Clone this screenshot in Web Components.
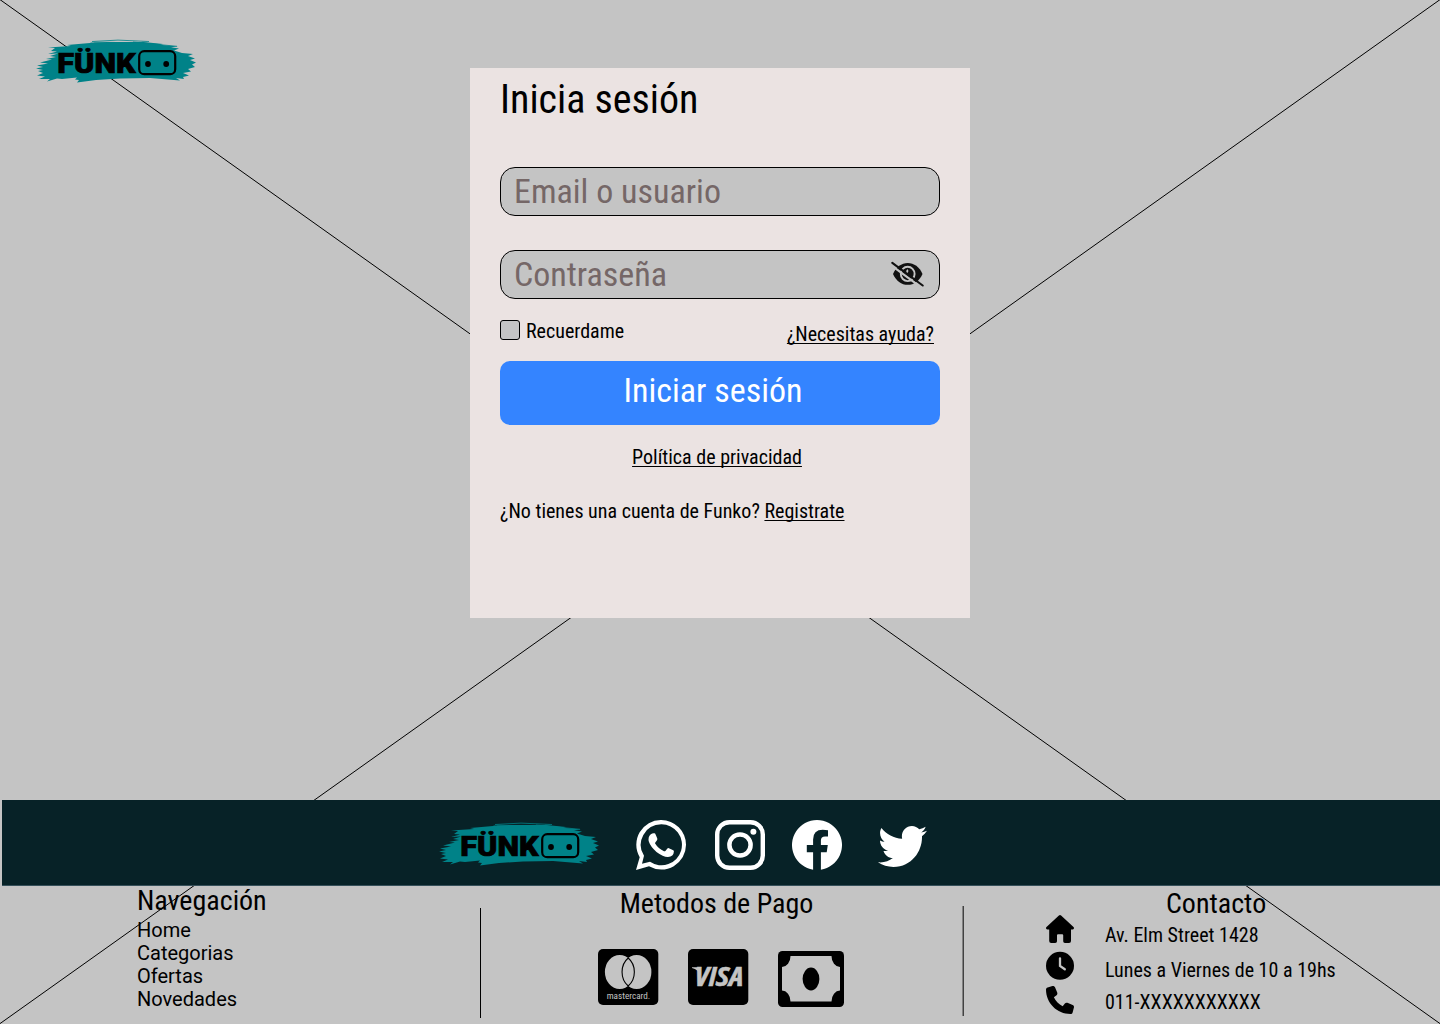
<!DOCTYPE html>
<html lang="es">
<head>
<meta charset="utf-8">
<title>Funko</title>
<style>
body{margin:0;background:#c4c4c4;font-family:"Roboto Condensed",Roboto,sans-serif;font-stretch:75%;color:#000}
</style>
</head>
<body>
<login-page></login-page>
<script>
function define(name, html){
  const t = document.createElement('template');
  t.innerHTML = html;
  customElements.define(name, class extends HTMLElement{
    constructor(){
      super();
      this.attachShadow({mode:'open'}).appendChild(t.content.cloneNode(true));
    }
  });
}

define('page-backdrop', `
<style>:host{position:absolute;inset:0;z-index:-1}svg{display:block}</style>
<svg width="1440" height="1024" stroke="#000" stroke-width="1"><path d="M0 -.4L1440 1023.600M0 1023.600L1440 -.4"/></svg>`);

define('funko-logo', `
<style>:host{display:block;width:162px;height:46px}svg{display:block}</style>
<svg width="162" height="46" viewBox="35 38 162 46">
<path fill="#008288" d="M55 48L48 47.5 71 46 67 45 90 43 91 42.500 108 42.500 94 42.200 93 41.800 118 42 148 41.800 141 41.800 163 44 160 44.800 178 46.5 171 47.3 179 48.6 174 50.5 182 53 193 54 188 56 195 58.5 190 60 196 62.5 192 64.5 195 67 188 69 191 71.5 183 73 189 75.5 183 77 184 79 176 78 180 80.5 150 78 120 78.5 96 80 77 82.5 79 80 75 79.5 77 77.5 62 79 57 78.5 47 81.5 50 79 39 79 45 76.5 37 75.5 43 73 38 71 43 70 36 68.5 43 67 37 65.5 48 63.5 40 62.5 52 59.5 46 59 56 57 50 56 58 53.5 48 54 57 51.5 51 51z"/>
<path stroke="#008288" stroke-width=".8" fill="none" d="M92 41.500L118 40.100 149 41.500M133 42L177 46.300"/>
<text x="57.200" y="73.400" font-family="Roboto" font-stretch="100%" font-weight="900" font-size="28" stroke="#000" stroke-width=".7" textLength="78.500" lengthAdjust="spacingAndGlyphs">FÜNK</text>
<rect x="139.200" y="51.200" width="36" height="23" rx="5" fill="none" stroke="#000" stroke-width="2.200"/>
<circle cx="148" cy="64" r="2.900"/><circle cx="166.200" cy="64" r="2.900"/>
</svg>`);

define('text-field', `
<style>
:host{display:flex;box-sizing:border-box;width:440px;height:49px;border:1px solid #000;border-radius:15px;background:#c4c4c4;padding:2px 15px 0 13px;justify-content:space-between;font-size:34px;line-height:42px;color:#756767}
::slotted(svg){margin-top:8px}
</style><slot></slot><slot name="icon"></slot>`);

define('check-option', `
<style>
:host{display:flex;gap:6px;font-size:20px;line-height:23px}
i{box-sizing:border-box;width:20px;height:20px;border:1px solid #000;border-radius:3px;background:#c4c4c4}
</style><i></i><span><slot></slot></span>`);

define('submit-button', `
<style>
:host{display:block;box-sizing:border-box;width:440px;height:64px;border-radius:10px;background:#3484ff;color:#fff;font-size:34px;line-height:41px;padding:9px 14px 0 0;text-align:center}
</style><slot></slot>`);

define('text-link', `
<style>:host{display:inline-block}a{font-size:20px;line-height:23px;text-decoration:underline;text-decoration-thickness:1px;text-underline-offset:2px;text-decoration-skip-ink:none}</style><a><slot></slot></a>`);

define('login-card', `
<style>
:host{display:flex;flex-direction:column;box-sizing:border-box;width:500px;height:550px;background:#ebe3e2;padding:8px 30px 0}
h1{margin:0 0 44px;font-weight:400;font-size:40px;line-height:47px}
text-field+text-field{margin-top:34px}
.row{display:flex;justify-content:space-between;margin-top:21px;height:41px;padding-right:6px}
.row text-link{margin-top:3px}
.privacy{margin:21px 6px 0 0;text-align:center;height:23px}
.join{margin-top:31px;font-size:20px;line-height:23px;white-space:nowrap}
</style>
<h1>Inicia sesión</h1>
<text-field>Email o usuario</text-field>
<text-field>Contraseña<svg slot="icon" width="33" height="26" viewBox="0 0 33 26"><path fill="#111" d="M2 12.900C5 6 10.500 2 16.700 2 23 2 28.500 6 31.500 12.900 28.500 19.800 23 23.800 16.700 23.800 10.500 23.800 5 19.800 2 12.900z"/><ellipse cx="16.700" cy="12.900" rx="6.900" ry="7.200" fill="none" stroke="#c4c4c4" stroke-width="1.900"/><path d="M16 8.800Q17.500 11 14.500 12" fill="none" stroke="#c4c4c4" stroke-width="1.800"/><path stroke="#c4c4c4" stroke-width="2.200" d="M-1 3.500L31 27"/><path stroke="#111" stroke-width="2.100" stroke-linecap="round" d="M1.300 1.800L31.700 24.500"/></svg></text-field>
<div class="row"><check-option>Recuerdame</check-option><text-link>¿Necesitas ayuda?</text-link></div>
<submit-button>Iniciar sesión</submit-button>
<div class="privacy"><text-link>Política de privacidad</text-link></div>
<div class="join">¿No tienes una cuenta de Funko? <text-link>Registrate</text-link></div>`);

define('social-bar', `
<style>
:host{display:flex;box-sizing:border-box;height:86px;margin-left:2px;padding:20px 0 0 436px;background:#072227;border-bottom:1px solid #35505a}
svg{display:block;flex:none}
funko-logo{margin-top:1px}
</style>
<funko-logo></funko-logo>
<svg style="margin-left:36px" width="50" height="50" viewBox="0 0 50 50" fill="#fff"><path fill-rule="evenodd" d="M25.300 0A24.700 24.700 0 0 1 50 24.700 24.700 24.700 0 0 1 13 46.300L0 50 3.700 37.200A24.700 24.700 0 0 1 25.300 0zM25.300 4.300A20.500 20.500 0 0 0 8 35.800L6 43.800 14 41.800A20.500 20.500 0 1 0 25.300 4.300z"/><path d="M14.800 14.200Q16.700 12.900 18.400 13.300 19.200 13.400 19.600 14.500L21.200 18.300Q21.600 19.300 21 20.200L19.300 22.400Q18.800 23 19.300 23.800 22.500 29 28 31.200 28.800 31.500 29.400 30.900L31.400 28.500Q32 27.800 32.900 28.200L37.200 30.300Q38 30.700 37.900 31.600 37.600 36.900 32 37 27.500 37.200 20.500 32 14.500 26.700 12.900 21.800 11.600 17 14.800 14.200z"/></svg>
<svg style="margin-left:29px" width="50" height="50" viewBox="0 0 50 50" fill="none" stroke="#fff"><rect x="2.200" y="2.200" width="45.600" height="45.600" rx="12.300" stroke-width="4.400"/><circle cx="25" cy="25" r="10.600" stroke-width="4.500"/><circle cx="38.400" cy="11.700" r="3" fill="#fff" stroke="none"/></svg>
<svg style="margin-left:27px" width="50" height="50" viewBox="0 0 50 50" fill="#fff"><path d="M21.100 49.700A25 25 0 1 1 28.900 49.700V32.300H34.700L35.800 25H28.900V20.300Q28.900 16.500 33.100 16.500H36V10.200Q33.500 9.700 30.800 9.700 21.100 9.700 21.100 19.500V25H14.800V32.300H21.100z"/></svg>
<svg style="margin:6px 0 0 36px" width="49" height="41" viewBox="0 48 512 416" preserveAspectRatio="none" fill="#fff"><path d="M459.370 151.716c.325 4.548.325 9.097.325 13.645 0 138.720-105.583 298.558-298.558 298.558-59.452 0-114.680-17.219-161.137-47.106 8.447.974 16.568 1.299 25.340 1.299 49.055 0 94.213-16.568 130.274-44.832-46.132-.975-84.792-31.188-98.112-72.772 6.498.974 12.995 1.624 19.818 1.624 9.421 0 18.843-1.300 27.614-3.573-48.081-9.747-84.143-51.980-84.143-102.985v-1.299c13.969 7.797 30.214 12.670 47.431 13.319-28.264-18.843-46.781-51.005-46.781-87.391 0-19.492 5.197-37.360 14.294-52.954 51.655 63.675 129.300 105.258 216.365 109.807-1.624-7.797-2.599-15.918-2.599-24.040 0-57.828 46.782-104.934 104.934-104.934 30.213 0 57.502 12.670 76.670 33.137 23.715-4.548 46.456-13.320 66.599-25.340-7.798 24.366-24.366 44.833-46.132 57.827 21.117-2.273 41.584-8.122 60.426-16.243-14.292 20.791-32.161 39.308-52.628 54.253z"/></svg>`);

define('footer-nav', `
<style>:host{display:block;box-sizing:border-box;width:480px;padding-left:137px}
h2{margin:-2px 0 2px;font-weight:400;font-size:28px;line-height:33px}
a{display:block;font-family:Roboto,sans-serif;font-stretch:100%;font-size:20px;line-height:23px}</style>
<h2>Navegación</h2><a>Home</a><a>Categorias</a><a>Ofertas</a><a>Novedades</a>`);

define('payment-methods', `
<style>:host{display:flex;width:484px}
i{width:1px;height:110px;background:#000}
i:last-child{width:2px;margin-top:-2px;background:linear-gradient(90deg,#828282 50%,#424242 50%)}
section{width:481px}
h2{margin:-21px 0 0;padding-right:10px;text-align:center;font-weight:400;font-size:28px;line-height:33px}
div{display:flex;padding:29px 0 0 117px}svg{display:block}</style>
<i></i><section>
<h2>Metodos de Pago</h2>
<div>
<svg width="60.500" height="56" viewBox="0 0 60.500 56"><rect width="60.300" height="56" rx="5"/><g fill="#c4c4c4"><ellipse cx="21.700" cy="23" rx="14.800" ry="17"/><ellipse cx="38.600" cy="23" rx="14.800" ry="17"/></g><path fill="none" stroke="#000" stroke-width="1.100" d="M30.200 9C22 16 22 30 30.200 37 38.400 30 38.400 16 30.200 9z"/><text transform="translate(8.700 50) scale(1 1.180)" x="0" y="0" fill="#c4c4c4" font-family="Roboto" font-size="8" textLength="43.500" lengthAdjust="spacingAndGlyphs">mastercard.</text></svg>
<svg style="margin-left:29.500px" width="60.500" height="56" viewBox="0 0 60.500 56"><rect width="60.300" height="56" rx="5"/><path fill="#c4c4c4" d="M4 18.200H11.500L13 26Q10 20.500 4 19z"/><text x="6.500" y="37.300" fill="#c4c4c4" stroke="#c4c4c4" stroke-width=".5" font-family="Open Sans" font-weight="700" font-style="italic" font-size="26.500" textLength="49" lengthAdjust="spacingAndGlyphs">VISA</text></svg>
<svg style="margin:2px 0 0 29.500px" width="66" height="56" viewBox="0 0 66 56"><rect width="66" height="56" rx="4.500"/><path fill="#c4c4c4" d="M12.500 5H53.500A8.500 11 0 0 0 62 16V39.500A8.500 11 0 0 0 53.500 50.500H12.500A8.500 11 0 0 0 4 39.500V16A8.500 11 0 0 0 12.500 5z"/><ellipse cx="33" cy="28" rx="8.400" ry="11.400"/></svg>
</div></section><i></i>`);

define('contact-row', `
<style>:host{display:flex;gap:31px;align-items:flex-start;font-size:20px;line-height:23px}::slotted(svg){display:block;flex:none}
span{padding-top:var(--drop,9px)}</style><slot name="icon"></slot><span><slot></slot></span>`);

define('contact-info', `
<style>:host{display:block;padding-left:82px}
h2{margin:1px 0 0 120px;font-weight:400;font-size:28px;line-height:33px}
contact-row{height:36px}contact-row:first-of-type{margin-top:-5px}</style>
<h2>Contacto</h2>
<contact-row><svg slot="icon" width="28" height="28" viewBox="0 0 28 28"><path d="M12.900.5Q14 -.5 15.100.5L27.500 12Q28.300 12.900 27.800 13.800 27.500 14.400 26.500 14.400H25V26Q25 28 23 28H19Q17.200 28 17.200 26.200V20.200Q17.200 19.200 16.200 19.200H12Q11 19.200 11 20.200V26.200Q11 28 9.200 28H5.200Q3.200 28 3.200 26V14.400H1.500Q.5 14.400.2 13.800-.3 12.900.5 12z"/></svg>Av. Elm Street 1428</contact-row>
<contact-row style="--drop:8px"><svg slot="icon" width="28" height="29" viewBox="0 0 28 29"><circle cx="14" cy="14.800" r="14"/><path d="M14 7.300V15L18.800 18.300" fill="none" stroke="#c4c4c4" stroke-width="2.300" stroke-linecap="round"/></svg>Lunes a Viernes de 10 a 19hs</contact-row>
<contact-row style="--drop:5px;margin-top:-1px"><svg slot="icon" width="28" height="28" viewBox="0 0 512 512"><path d="M164.900 24.600c-7.700-18.600-28-28.500-47.400-23.200l-88 24C12.100 30.200 0 46 0 64C0 311.400 200.600 512 448 512c18 0 33.800-12.100 38.600-29.500l24-88c5.300-19.400-4.600-39.700-23.200-47.400l-96-40c-16.300-6.800-35.200-2.100-46.300 11.600L304.700 368C234.300 334.700 177.300 277.700 144 207.300L193.300 167c13.700-11.200 18.400-30 11.600-46.300l-40-96z"/></svg>011-XXXXXXXXXXX</contact-row>`);

define('login-page', `
<style>
:host{display:flex;flex-direction:column;position:relative;z-index:0;width:1440px;height:1024px;overflow:hidden}
main{display:flex;height:800px;flex:none}
main funko-logo{margin:38px 0 0 35px}
login-card{margin:68px 0 0 273px}
footer{display:flex}
payment-methods{margin-top:22px}
</style>
<page-backdrop></page-backdrop>
<main><funko-logo></funko-logo><login-card></login-card></main>
<social-bar></social-bar>
<footer><footer-nav></footer-nav><payment-methods></payment-methods><contact-info></contact-info></footer>`);
</script>
</body>
</html>
